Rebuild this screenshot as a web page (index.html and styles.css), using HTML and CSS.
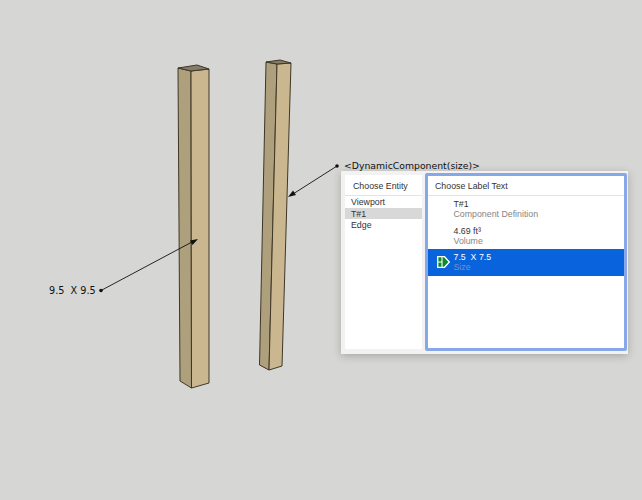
FILE: index.html
```html
<!DOCTYPE html>
<html lang="en">
<head>
    <meta charset="UTF-8">
    <title>Choose Label Text</title>
    <link rel="stylesheet" href="styles.css">
</head>
<body>
<div class="scene">
    <svg class="model" width="642" height="500" viewBox="0 0 642 500">
        <defs>
            <filter id="soft"><feGaussianBlur stdDeviation="0.4"/></filter>
        </defs>
        <g filter="url(#soft)" stroke="#3f3726" stroke-width="1" stroke-linejoin="round">
            <!-- left post -->
            <polygon points="178,68 191,71 191.5,388 180,381" fill="#ae9f7d"/>
            <polygon points="191,71 209,69 209,383 191.5,388" fill="#cbb78f"/>
            <polygon points="178,68 197,65 209,69 191,71" fill="#857b68"/>
            <!-- right post -->
            <polygon points="266,62 277,64 269,370 259.5,365" fill="#ae9f7d"/>
            <polygon points="277,64 291,63 282,366 269,370" fill="#cbb78f"/>
            <polygon points="266,62 280,60 291,63 277,64" fill="#857b68"/>
        </g>
        <g class="leader">
            <line x1="101" y1="290.5" x2="192" y2="242"/>
            <polygon points="198,239 190,240.5 192.5,245"/>
            <circle cx="101" cy="290.5" r="1.8"/>
            <line x1="337" y1="166" x2="293" y2="194"/>
            <polygon points="288,197 293,190.5 296,195"/>
            <circle cx="337" cy="166" r="1.8"/>
        </g>
    </svg>

    <div class="tag tag-left">9.5&nbsp; X 9.5</div>
    <div class="tag tag-right">&lt;DynamicComponent(size)&gt;</div>

    <div class="dialog">
        <div class="entities">
            <div class="head head-entity">Choose Entity</div>
            <div class="entity">Viewport</div>
            <div class="entity current">T#1</div>
            <div class="entity">Edge</div>
        </div>
        <div class="labels">
            <div class="head">Choose Label Text</div>
            <div class="option">
                <div class="title">T#1</div>
                <div class="sub">Component Definition</div>
            </div>
            <div class="option">
                <div class="title">4.69 ft³</div>
                <div class="sub">Volume</div>
            </div>
            <div class="option selected">
                <svg class="icon" width="13" height="12" viewBox="0 0 13 12">
                    <path d="M0.7 0.7H7.5L12.3 6L7.5 11.3H0.7Z" fill="#0c8a2c" stroke="#fff" stroke-width="1.3"/>
                    <path d="M5 1V11M1 6H5" stroke="#fff" stroke-width="1.1"/>
                </svg>
                <div class="title">7.5&nbsp; X 7.5</div>
                <div class="sub">Size</div>
            </div>
        </div>
    </div>
</div>
</body>
</html>
```

FILE: styles.css
```css
body {
    margin: 0;
    background-color: #d6d6d4;
    font-family: "Liberation Sans", Arial, sans-serif;
}
.scene {
    position: relative;
    width: 642px;
    height: 500px;
    overflow: hidden;
}
.model {
    position: absolute;
    top: 0;
    left: 0;
}
.leader line {
    stroke: #111;
    stroke-width: 0.9;
}
.leader polygon,
.leader circle {
    fill: #111;
}
.tag {
    position: absolute;
    font-family: "DejaVu Sans", sans-serif;
    line-height: 14px;
    color: #111;
    white-space: nowrap;
}
.tag-left {
    left: 49px;
    top: 284px;
    font-size: 9.7px;
}
.tag-right {
    left: 344px;
    top: 159px;
    font-size: 9.3px;
}
.dialog {
    position: absolute;
    left: 341px;
    top: 171px;
    width: 287px;
    height: 183px;
    box-sizing: border-box;
    padding: 2px 1px 3px 4px;
    display: flex;
    gap: 3px;
    background-color: #f2f2f2;
    box-shadow: 0 2px 8px rgba(0, 0, 0, 0.22);
    font-size: 8.8px;
    color: #333;
}
.entities {
    width: 77px;
    margin: 2px 0;
    background: white;
}
.labels {
    flex: 1;
    border: 3px solid #86a7e8;
    border-radius: 2px;
    background: white;
}
.head {
    height: 19px;
    line-height: 20px;
    padding-left: 7px;
    border-bottom: 1px solid #e4e4e4;
}
.head-entity {
    height: 20px;
    line-height: 22px;
    padding-left: 8px;
}
.entity {
    height: 11.5px;
    line-height: 12.5px;
    padding-left: 6px;
}
.current {
    background-color: #d8d8d8;
}
.option {
    position: relative;
    height: 26.5px;
    padding: 3px 0 0 25.5px;
    box-sizing: border-box;
}
.title {
    line-height: 10px;
}
.sub {
    line-height: 10px;
    color: #858585;
}
.selected {
    background-color: #0863dc;
}
.selected .title {
    color: white;
}
.selected .sub {
    color: #6f93c8;
}
.icon {
    position: absolute;
    left: 9px;
    top: 7px;
}
```
